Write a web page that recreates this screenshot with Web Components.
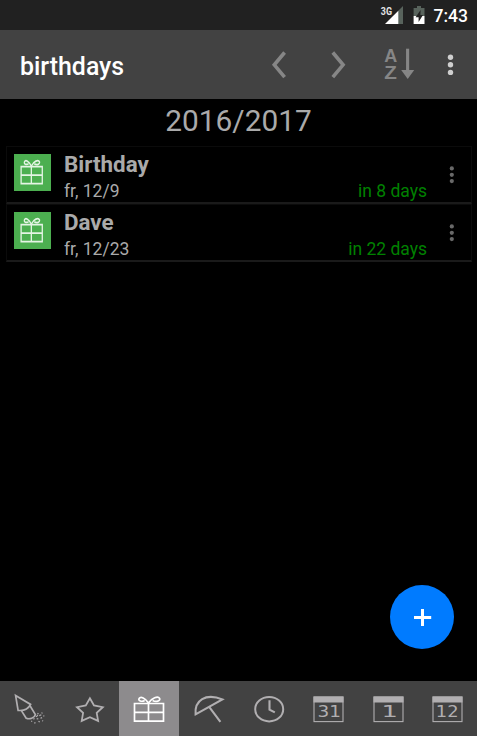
<!DOCTYPE html>
<html lang="en">
<head>
<meta charset="utf-8">
<title>birthdays</title>
<style>
    html, body { margin: 0; height: 100%; background: #000; overflow: hidden; }
    body { font-family: Roboto, "Liberation Sans", sans-serif; }
</style>
</head>
<body>
<birthday-app>
    <status-bar slot="top" time="7:43"></status-bar>
    <app-toolbar slot="top">birthdays</app-toolbar>
    <year-title>2016/2017</year-title>
    <event-row><span slot="name">Birthday</span><span slot="date">fr, 12/9</span><span slot="left">in 8 days</span></event-row>
    <event-row><span slot="name">Dave</span><span slot="date">fr, 12/23</span><span slot="left">in 22 days</span></event-row>
    <add-button slot="fab"></add-button>
    <tab-bar slot="bottom">
        <tab-item icon="rocket"></tab-item>
        <tab-item icon="star"></tab-item>
        <tab-item icon="gift" active></tab-item>
        <tab-item icon="umbrella"></tab-item>
        <tab-item icon="clock"></tab-item>
        <tab-item icon="cal31"></tab-item>
        <tab-item icon="cal1"></tab-item>
        <tab-item icon="cal12"></tab-item>
    </tab-bar>
</birthday-app>

<script>
class BaseElement extends HTMLElement {
    constructor() {
        super();
        this.shadow = this.attachShadow({mode: 'open'});
    }

    connectedCallback() {
        this.shadow.innerHTML = this.render();
    }
}

const gift = `
    <path d="M15.5 22.5H44.5V40.2H15.5ZM29.5 22.5V40.2M15.5 31.4H44.5"/>
    <path d="M29.5 22C26.2 16.9 21.7 15 20.1 17.5C18.9 20.1 22.7 21 25.7 19.5M29.5 22C32.8 16.9 39 14.8 40.6 17.4C41.8 20 37 21.5 33.6 19.5"/>`;

const calendar = (num, x, width) => `
    <rect x="16" y="16" width="29" height="24.6" stroke-width="1.1"/>
    <rect x="15.5" y="15.5" width="30" height="6" fill="currentColor" stroke="none"/>
    <text x="${x}" y="36.4" textLength="${width}" lengthAdjust="spacingAndGlyphs">${num}</text>`;

const icons = {
    rocket: `
        <path d="M15.6 14.4L30.6 23.4C28.5 27.5 24 30 18.1 29.4Z"/>
        <path d="M21.4 29.6L26.2 37.2C29.5 38.6 34.6 37 35.4 33.6L30 24.8"/>
        <path stroke-width="1.2" d="M37.5 32.2l1 1M41.5 31.6l1 .8M35.8 35.3l1.5 .5M39.3 34.6l2-.8M43.3 34.8l1 .3M33.2 38l1.4-.3M36.7 37.6l1.6 .4M40.5 37.2l1.6-.6M31.2 40l1 .5M35.2 41.2l-.6 1.3M38.5 40.2l1.2 .8M42.3 39.6l.8 .4M37 33.8l.8 1.2"/>`,
    star: `<path stroke-width="1.8" d="M29.9 17.2L34 24.4L42.8 26.2L36.7 31.8L38.1 39.9L29.9 36.2L21.7 39.9L23.1 31.8L17 26.2L25.8 24.4Z"/>`,
    gift,
    umbrella: `<path stroke-width="2.1" d="M16.6 33.4C15.3 19.5 26.5 11.6 43.4 18.4ZM29.6 25.2L41.4 40.8"/>`,
    clock: `<ellipse cx="30.2" cy="28.2" rx="14" ry="12.2" stroke-width="2"/><path stroke-width="2.1" d="M30.5 19.3V28.6L35.8 31.4"/>`,
    cal31: calendar('31', 19.5, 23.5),
    cal1: calendar('1', 23.4, 16.4),
    cal12: calendar('12', 18.8, 22.8)
};

class BirthdayApp extends BaseElement {
    render() {
        return `
        <style>
            :host { display: flex; flex-direction: column; position: relative; height: 100vh; }
            main { flex: 1; min-height: 0; }
            .fab { position: absolute; right: 23px; bottom: 87px; }
        </style>
        <slot name="top"></slot>
        <main><slot></slot></main>
        <div class="fab"><slot name="fab"></slot></div>
        <slot name="bottom"></slot>`;
    }
}

class StatusBar extends BaseElement {
    render() {
        return `
        <style>
            :host { display: flex; justify-content: flex-end; align-items: center; height: 30px; flex: none;
                background: #212121; color: #fff; padding-right: 9px; box-sizing: border-box; }
            svg { display: block; }
            .battery { margin-left: 8px; }
            .time { font-size: 17.5px; font-weight: 500; line-height: 30px; margin-left: 8px; padding-top: 1px; height: 29px; }
            text { font: bold 10.5px Roboto, sans-serif; }
        </style>
        <svg width="24" height="30" viewBox="380 0 24 30">
            <path fill="#58635c" d="M403 6V24H398V11Z"/>
            <path fill="#fff" d="M385 24H398.3V10.8Z"/>
            <text fill="#e4e4e4" x="380.8" y="14.6" textLength="11.2" lengthAdjust="spacingAndGlyphs">3G</text>
        </svg>
        <svg class="battery" width="14" height="30" viewBox="412 0 14 30">
            <path fill="#58635c" d="M417 6H421V8H424.5V16H413.6V8H417Z"/>
            <path fill="#fff" d="M413.6 16H424.5V24H413.6Z"/>
            <path fill="#212121" d="M420.6 10L415.6 17.2H418.6V22L423 15H420.4Z"/>
        </svg>
        <span class="time">${this.getAttribute('time')}</span>`;
    }
}

class AppToolbar extends BaseElement {
    render() {
        return `
        <style>
            :host { display: flex; align-items: center; height: 69px; flex: none; box-sizing: border-box;
                padding: 0 5px 0 20px; background: #424242; }
            h1 { flex: 1; margin: 0; padding-top: 4px; color: #fff; font-size: 24.9px; font-weight: 500; line-height: 30px; }
            svg { display: block; fill: none; stroke: #868686; stroke-width: 3.6; }
            text { font: bold 18px "Liberation Sans", sans-serif; fill: #868686; stroke: none; }
            .fill { fill: #868686; stroke: none; }
            .dots { fill: #cfcfcf; stroke: none; }
        </style>
        <h1><slot></slot></h1>
        <svg width="60" height="69" viewBox="249 30 60 69"><path d="M284.6 52.5L274.3 64.8L284.6 77.1"/></svg>
        <svg width="60" height="69" viewBox="309 30 60 69"><path d="M332.8 52.5L343.1 64.8L332.8 77.1"/></svg>
        <svg width="60" height="69" viewBox="369 30 60 69">
            <text x="384.3" y="61.8">A</text>
            <text x="384.2" y="79" textLength="12.6" lengthAdjust="spacingAndGlyphs">Z</text>
            <path stroke-width="3.1" d="M407.6 48.7V71"/>
            <path class="fill" d="M401.2 70H414.2L407.7 79Z"/>
        </svg>
        <svg class="dots" width="43" height="69" viewBox="429 30 43 69">
            <circle cx="450.5" cy="57.2" r="2.7"/><circle cx="450.5" cy="64.8" r="2.7"/><circle cx="450.5" cy="72.4" r="2.7"/>
        </svg>`;
    }
}

class YearTitle extends BaseElement {
    render() {
        return `
        <style>
            :host { display: block; height: 47px; line-height: 43px; text-align: center; font-size: 29.8px; color: #aaa; }
        </style>
        <slot></slot>`;
    }
}

class EventRow extends BaseElement {
    render() {
        return `
        <style>
            :host { display: flex; height: 58px; box-sizing: border-box; margin: 0 5px 0 6px;
                border: 1px solid #0b0b0b; border-bottom: 2px solid #1a1a1a; color: #aaa; }
            .badge { flex: none; width: 37px; height: 37px; margin: 7px 13px 0 7px; background: #4caf50; }
            svg { display: block; }
            .text { flex: 1; display: flex; flex-direction: column; }
            .name { font-size: 22.4px; font-weight: bold; line-height: 26px; padding-top: 4px; }
            .line { display: flex; justify-content: space-between; font-size: 17.5px; line-height: 20px; padding-top: 4px; }
            .left { color: #008000; }
            .menu { margin-left: 15px; fill: #696969; }
        </style>
        <div class="badge">
            <svg width="37" height="37" viewBox="0 0 37 37" fill="none" stroke="#e4f4e4">
                <g transform="translate(-4.2 -9) scale(.73 .96)" stroke-width="1.8">${gift}</g>
            </svg>
        </div>
        <div class="text">
            <div class="name"><slot name="name"></slot></div>
            <div class="line"><slot name="date"></slot><div class="left"><slot name="left"></slot></div></div>
        </div>
        <svg class="menu" width="29" height="55" viewBox="442 147 29 55">
            <circle cx="451.8" cy="168.4" r="2.1"/><circle cx="451.8" cy="174.8" r="2.1"/><circle cx="451.8" cy="181.1" r="2.1"/>
        </svg>`;
    }
}

class AddButton extends BaseElement {
    render() {
        return `
        <style>
            :host { display: block; width: 64px; height: 64px; border-radius: 50%; background: #007bff; }
            svg { display: block; }
        </style>
        <svg width="64" height="64" viewBox="0 0 64 64"><path d="M24 32.6H41.2M32.5 24V41" stroke="#fff" stroke-width="3"/></svg>`;
    }
}

class TabBar extends BaseElement {
    render() {
        return `
        <style>
            :host { display: flex; height: 55px; flex: none; background: #424242; }
        </style>
        <slot></slot>`;
    }
}

class TabItem extends BaseElement {
    render() {
        return `
        <style>
            :host { display: block; flex: 1; min-width: 0; color: #b1afb1; }
            :host([active]) { background: #8d8b8d; color: #fff; }
            svg { display: block; fill: none; stroke: currentColor; stroke-width: 1.7; }
            text { font: 15px "DejaVu Sans", sans-serif; fill: currentColor; stroke: none; }
        </style>
        <svg width="59.625" height="55" viewBox="0 0 59.625 55">${icons[this.getAttribute('icon')]}</svg>`;
    }
}

customElements.define('birthday-app', BirthdayApp);
customElements.define('status-bar', StatusBar);
customElements.define('app-toolbar', AppToolbar);
customElements.define('year-title', YearTitle);
customElements.define('event-row', EventRow);
customElements.define('add-button', AddButton);
customElements.define('tab-bar', TabBar);
customElements.define('tab-item', TabItem);
</script>
</body>
</html>
